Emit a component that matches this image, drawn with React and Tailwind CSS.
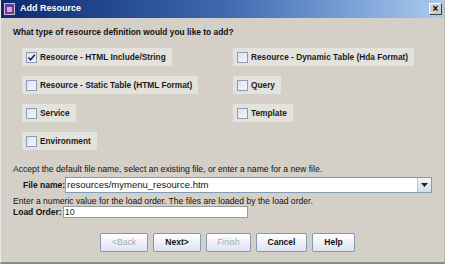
import React from 'react'

const font = { fontFamily: '"Liberation Sans", Arial, sans-serif' }

function Check({ checked, label }) {
    return (
        <div className="flex items-center gap-[3px] bg-[#e4e2dd] pl-[4px] pr-[6px] h-[18px] justify-self-start whitespace-nowrap">
            <div className="w-[11px] h-[11px] border border-[#8a9cb8] bg-gradient-to-br from-[#dde3ec] to-[#f4f6fa] flex items-center justify-center">
                {checked && (
                    <svg width="9" height="9" viewBox="0 0 9 9">
                        <path d="M1.5 4.5 L3.5 6.8 L7.8 1.8" stroke="#223" strokeWidth="1.6" fill="none" />
                    </svg>
                )}
            </div>
            <span className="text-[8.3px] font-bold text-[#1a1a1a] leading-none">{label}</span>
        </div>
    )
}

function Btn({ label, disabled, w }) {
    return (
        <div className={`h-[19px] ${w} border border-[#8797b0] rounded-[2px] bg-gradient-to-b from-[#ffffff] to-[#dde4ef] flex items-center justify-center text-[8.5px] ${disabled ? 'text-[#a8a8a8]' : 'text-[#111] font-bold'}`}>
            {label}
        </div>
    )
}

export default function App() {
    return (
        <div className="w-[450px] h-[268px] bg-white" style={font}>
            <div className="w-[445px] h-[264px] bg-[#d4d0c8] border-b-2 border-b-[#8c8a86] border-r border-r-[#bcb9b3] border-l border-l-[#ebe9e4] flex flex-col">
                <div className="h-[18px] shrink-0 bg-gradient-to-r from-[#0c2a70] via-[#3e68b0] to-[#aacbf0] flex items-center pl-[3px] pr-[2px]">
                    <div className="w-[11px] h-[12px] bg-[#6a3d8f] border border-[#cdb7e0] flex items-center justify-center">
                        <div className="w-[5px] h-[5px] bg-[#c9a8e6]"></div>
                    </div>
                    <span className="ml-[5px] text-[9px] font-bold text-white">Add Resource</span>
                    <div className="ml-auto w-[13px] h-[12px] bg-[#d4d0c8] border border-t-white border-l-white border-r-[#404040] border-b-[#404040] flex items-center justify-center text-[10px] font-bold leading-none text-black">×</div>
                </div>
                <div className="pl-[12px] pt-[8px] pr-[12px] flex flex-col">
                    <div className="text-[8.4px] font-bold text-[#111] leading-[12px] whitespace-nowrap">What type of resource definition would you like to add?</div>
                    <div className="grid grid-cols-[211px_1fr] gap-y-[10px] mt-[10px] pl-[9px]">
                        <Check checked label="Resource - HTML Include/String" />
                        <Check label="Resource - Dynamic Table (Hda Format)" />
                        <Check label="Resource - Static Table (HTML Format)" />
                        <Check label="Query" />
                        <Check label="Service" />
                        <Check label="Template" />
                        <Check label="Environment" />
                    </div>
                    <div className="text-[8.6px] text-[#111] mt-[14px] leading-[11px] whitespace-nowrap">Accept the default file name, select an existing file, or enter a name for a new file.</div>
                    <div className="flex items-center mt-[2px] pl-[10px]">
                        <span className="text-[8.5px] font-bold text-[#111] w-[42px] whitespace-nowrap">File name:</span>
                        <div className="flex h-[16px] w-[368px] border border-[#7f9db9] bg-white">
                            <div className="flex-1 text-[9.5px] text-[#111] pl-[1px] leading-[14px] whitespace-nowrap">resources/mymenu_resource.htm</div>
                            <div className="w-[14px] border-l border-[#b6c5d8] bg-gradient-to-b from-[#f2f5fa] to-[#d5deea] flex items-center justify-center">
                                <svg width="7" height="4" viewBox="0 0 7 4"><path d="M0 0 H7 L3.5 4 Z" fill="#222" /></svg>
                            </div>
                        </div>
                    </div>
                    <div className="text-[8.6px] text-[#111] mt-[3px] leading-[10px] whitespace-nowrap">Enter a numeric value for the load order. The files are loaded by the load order.</div>
                    <div className="flex items-center h-[12px]">
                        <span className="text-[8.5px] font-bold text-[#111] mr-[1px] whitespace-nowrap">Load Order:</span>
                        <div className="h-[12px] w-[185px] border border-[#9a9a9a] bg-white text-[9px] text-[#333] leading-[10px] pl-[1px]">10</div>
                    </div>
                </div>
                <div className="flex gap-[5px] pl-[99px] mt-[15px]">
                    <Btn label="<Back" disabled w="w-[48px]" />
                    <Btn label="Next>" w="w-[48px]" />
                    <Btn label="Finish" disabled w="w-[45px]" />
                    <Btn label="Cancel" w="w-[51px]" />
                    <Btn label="Help" w="w-[43px]" />
                </div>
            </div>
        </div>
    )
}
